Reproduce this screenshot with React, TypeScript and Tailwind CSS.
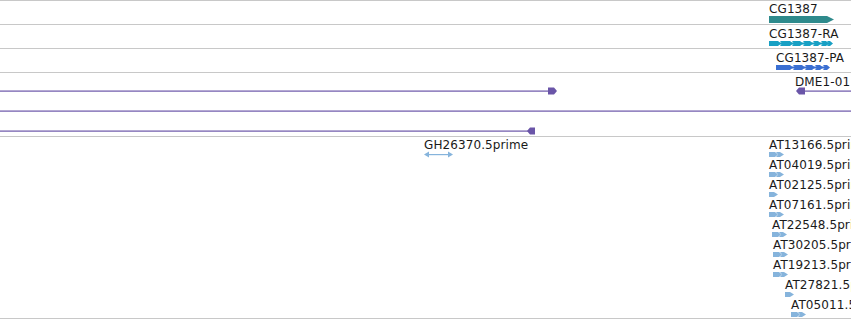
import React from "react";

type Feat = { label: string; x: number; y: number; kind: "double" | "single" };

const estFeats: Feat[] = [
  { label: "AT13166.5prime", x: 769, y: 1, kind: "double" },
  { label: "AT04019.5prime", x: 769, y: 21, kind: "double" },
  { label: "AT02125.5prime", x: 769, y: 41, kind: "single" },
  { label: "AT07161.5prime", x: 769, y: 61, kind: "double" },
  { label: "AT22548.5prime", x: 772, y: 81, kind: "double" },
  { label: "AT30205.5prime", x: 773, y: 101, kind: "double" },
  { label: "AT19213.5prime", x: 773, y: 121, kind: "double" },
  { label: "AT27821.5prime", x: 785, y: 141, kind: "single" },
  { label: "AT05011.5prime", x: 791, y: 161, kind: "double" },
];

const Label = ({ x, y, children }: { x: number; y: number; children: React.ReactNode }) => (
  <div
    className="absolute whitespace-nowrap text-[12px] leading-[14px] tracking-[0.1px] text-[#1a1a1a] font-['DejaVu_Sans',sans-serif]"
    style={{ left: x, top: y }}
  >
    {children}
  </div>
);

const Track = ({ h, children }: { h: string; children: React.ReactNode }) => (
  <div className={`relative shrink-0 border-b border-[#c8c8c8] ${h}`}>{children}</div>
);

const App = () => {
  return (
    <div className="flex flex-col w-[851px] h-[320px] bg-white overflow-hidden border-t border-[#c8c8c8] font-['DejaVu_Sans',sans-serif]">
      {/* CG1387 gene */}
      <Track h="h-[24px]">
        <Label x={769} y={1}>CG1387</Label>
        <svg className="absolute left-[769px] top-[15px]" width="66" height="7" viewBox="0 0 66 7">
          <polygon points="0,0 58,0 65,3.5 58,7 0,7" fill="#2e8a8c" />
        </svg>
      </Track>
      {/* CG1387-RA */}
      <Track h="h-[24px]">
        <Label x={769} y={2}>CG1387-RA</Label>
        <svg className="absolute left-[769px] top-[15px]" width="66" height="7" viewBox="0 0 66 7">
          <rect x="0" y="2.5" width="62" height="2" fill="#18a0c4" />
          <polygon points="0,1 9,1 12,3.5 9,6 0,6" fill="#18a0c4" />
          <polygon points="11,1 21,1 24,3.5 21,6 11,6 13,3.5" fill="#18a0c4" />
          <polygon points="23,1 31,1 34,3.5 31,6 23,6 25,3.5" fill="#18a0c4" />
          <polygon points="34,1 41,1 44,3.5 41,6 34,6 36,3.5" fill="#18a0c4" />
          <polygon points="44,1 49,1 52,3.5 49,6 44,6 46,3.5" fill="#18a0c4" />
          <polygon points="52,1 57,1 60,3.5 57,6 52,6 54,3.5" fill="#18a0c4" />
          <polygon points="58,1 61,1 64,3.5 61,6 58,6 60,3.5" fill="#18a0c4" />
        </svg>
      </Track>
      {/* CG1387-PA */}
      <Track h="h-[24px]">
        <Label x={776} y={2}>CG1387-PA</Label>
        <svg className="absolute left-[776px] top-[15px]" width="58" height="7" viewBox="0 0 58 7">
          <rect x="0" y="2.5" width="52" height="2" fill="#3a6fd2" />
          <polygon points="0,1 14,1 17,3.5 14,6 0,6" fill="#3a6fd2" />
          <polygon points="17,1 26,1 29,3.5 26,6 17,6 19,3.5" fill="#3a6fd2" />
          <polygon points="29,1 36,1 39,3.5 36,6 29,6 31,3.5" fill="#3a6fd2" />
          <polygon points="39,1 44,1 47,3.5 44,6 39,6 41,3.5" fill="#3a6fd2" />
          <polygon points="47,1 51,1 54,3.5 51,6 47,6 49,3.5" fill="#3a6fd2" />
        </svg>
      </Track>
      {/* DME1 matches */}
      <Track h="h-[64px]">
        <Label x={795} y={2}>DME1-01</Label>
        <svg className="absolute left-0 top-0" width="851" height="63" viewBox="0 0 851 63">
          <rect x="0" y="17.5" width="550" height="1.2" fill="#6a55a8" />
          <polygon points="548,14.5 554,14.5 557,18 554,21.5 548,21.5" fill="#6a55a8" />
          <rect x="803" y="17.5" width="48" height="1.2" fill="#6a55a8" />
          <polygon points="796,18 799,14.5 805,14.5 805,21.5 799,21.5" fill="#6a55a8" />
          <rect x="0" y="37.5" width="851" height="1.2" fill="#6a55a8" />
          <rect x="0" y="57.5" width="530" height="1.2" fill="#6a55a8" />
          <polygon points="527,58 530,54.5 535,54.5 535,61.5 530,61.5" fill="#6a55a8" />
        </svg>
      </Track>
      {/* EST 5prime reads */}
      <Track h="h-[182px]">
        <Label x={424} y={1}>GH26370.5prime</Label>
        <svg className="absolute left-[424px] top-[14px]" width="30" height="7" viewBox="0 0 30 7">
          <rect x="2" y="3" width="25" height="1.2" fill="#86b4dc" />
          <polygon points="0,3.5 5,0.5 5,6.5" fill="#86b4dc" />
          <polygon points="29,3.5 24,0.5 24,6.5" fill="#86b4dc" />
        </svg>
        {estFeats.map((f) => (
          <React.Fragment key={f.label}>
            <Label x={f.x} y={f.y}>{f.label}</Label>
            <svg
              className="absolute"
              style={{ left: f.x, top: f.y + 13 }}
              width="16"
              height="7"
              viewBox="0 0 16 7"
            >
              {f.kind === "double" ? (
                <>
                  <polygon points="0,1 6,1 9,3.5 6,6 0,6" fill="#86b4dc" />
                  <polygon points="7,1 11,1 15,3.5 11,6 7,6 9,3.5" fill="#86b4dc" />
                </>
              ) : (
                <polygon points="0,1 5,1 9,3.5 5,6 0,6" fill="#86b4dc" />
              )}
            </svg>
          </React.Fragment>
        ))}
      </Track>
    </div>
  );
};

export default App;
